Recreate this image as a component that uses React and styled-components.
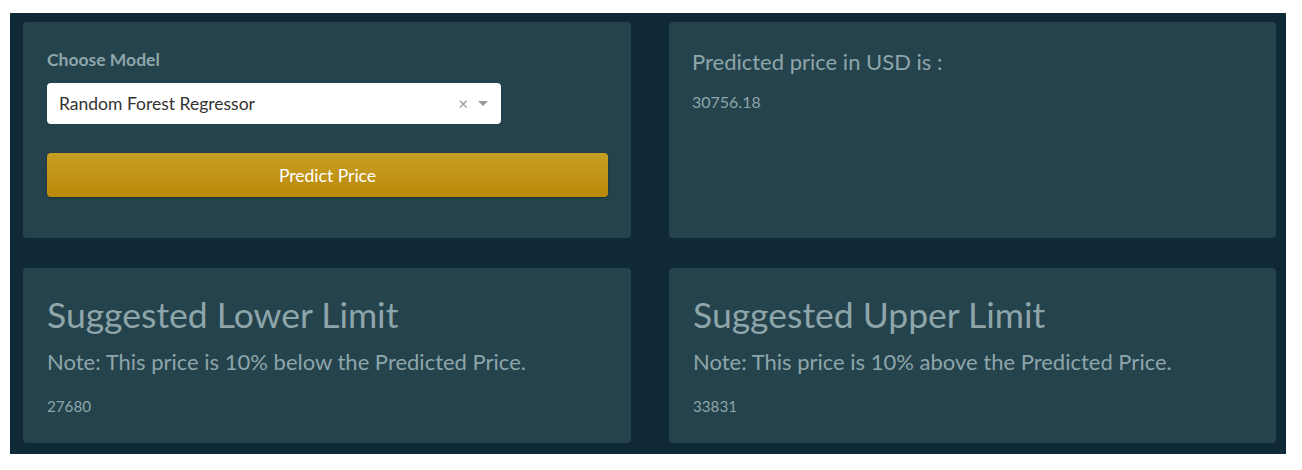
import React from 'react';
import styled, { createGlobalStyle } from 'styled-components';

const GlobalStyle = createGlobalStyle`
  body {
    margin: 0;
    background: #ffffff;
    font-family: Lato, "Open Sans", sans-serif;
  }
`;

const Page = styled.div`
  padding: 13px 16px 16px 10px;
`;

const Board = styled.div`
  display: grid;
  grid-template-columns: 608px 607px;
  grid-template-rows: 216px 175px;
  column-gap: 38px;
  row-gap: 30px;
  width: 1276px;
  box-sizing: border-box;
  padding: 9px 10px 11px 13px;
  background: #0f2a36;
`;

const Card = styled.div`
  background: #25434c;
  border-radius: 4px;
  padding: ${(p) => p.$pad || '24px'};
  box-sizing: border-box;
  color: #8ea5aa;
`;

const Label = styled.div`
  font-size: 17.5px;
  line-height: 20px;
  font-weight: 700;
  color: #8ea5aa;
  margin-top: 4px;
  margin-bottom: 13px;
`;

const Select = styled.div`
  width: 454px;
  height: 41px;
  box-sizing: border-box;
  background: #ffffff;
  border-radius: 4px;
  display: flex;
  align-items: center;
  padding: 0 12px;
  color: #333333;
  font-size: 17.5px;
`;

const SelectValue = styled.span`
  flex: 1;
`;

const Clear = styled.span`
  color: #999999;
  font-size: 17px;
  margin-right: 10px;
`;

const Caret = styled.span`
  width: 0;
  height: 0;
  border-left: 5px solid transparent;
  border-right: 5px solid transparent;
  border-top: 5px solid #999999;
  margin-right: 1px;
`;

const Button = styled.button`
  display: block;
  width: 561px;
  height: 44px;
  margin-top: 29px;
  border: none;
  border-radius: 4px;
  background: linear-gradient(#c79f24, #b98909);
  color: #ffffff;
  font-family: inherit;
  font-size: 17.5px;
  box-shadow: 0 1px 2px rgba(0, 0, 0, 0.3);
`;

const Heading = styled.div`
  font-size: ${(p) => p.$size}px;
  line-height: ${(p) => p.$line}px;
  margin-top: ${(p) => p.$gap || 0}px;
  color: #8ea5aa;
`;

const Value = styled.div`
  font-size: ${(p) => p.$size}px;
  line-height: 20px;
  color: #8ea5aa;
  margin-top: ${(p) => p.$gap}px;
`;

const Limit = ({ title, note, value }) => (
  <Card $pad="26px 24px">
    <Heading $size={35.5} $line={42}>{title}</Heading>
    <Heading $size={22} $line={26} $gap={13}>{note}</Heading>
    <Value $size={15.2} $gap={21}>{value}</Value>
  </Card>
);

export default function App() {
  return (
    <>
      <GlobalStyle />
      <Page>
        <Board>
          <Card $pad="24px">
            <Label>Choose Model</Label>
            <Select>
              <SelectValue>Random Forest Regressor</SelectValue>
              <Clear>×</Clear>
              <Caret />
            </Select>
            <Button>Predict Price</Button>
          </Card>
          <Card $pad="27px 23px">
            <Heading $size={22} $line={26}>Predicted price in USD is :</Heading>
            <Value $size={16} $gap={17}>30756.18</Value>
          </Card>
          <Limit
            title="Suggested Lower Limit"
            note="Note: This price is 10% below the Predicted Price."
            value="27680"
          />
          <Limit
            title="Suggested Upper Limit"
            note="Note: This price is 10% above the Predicted Price."
            value="33831"
          />
        </Board>
      </Page>
    </>
  );
}
